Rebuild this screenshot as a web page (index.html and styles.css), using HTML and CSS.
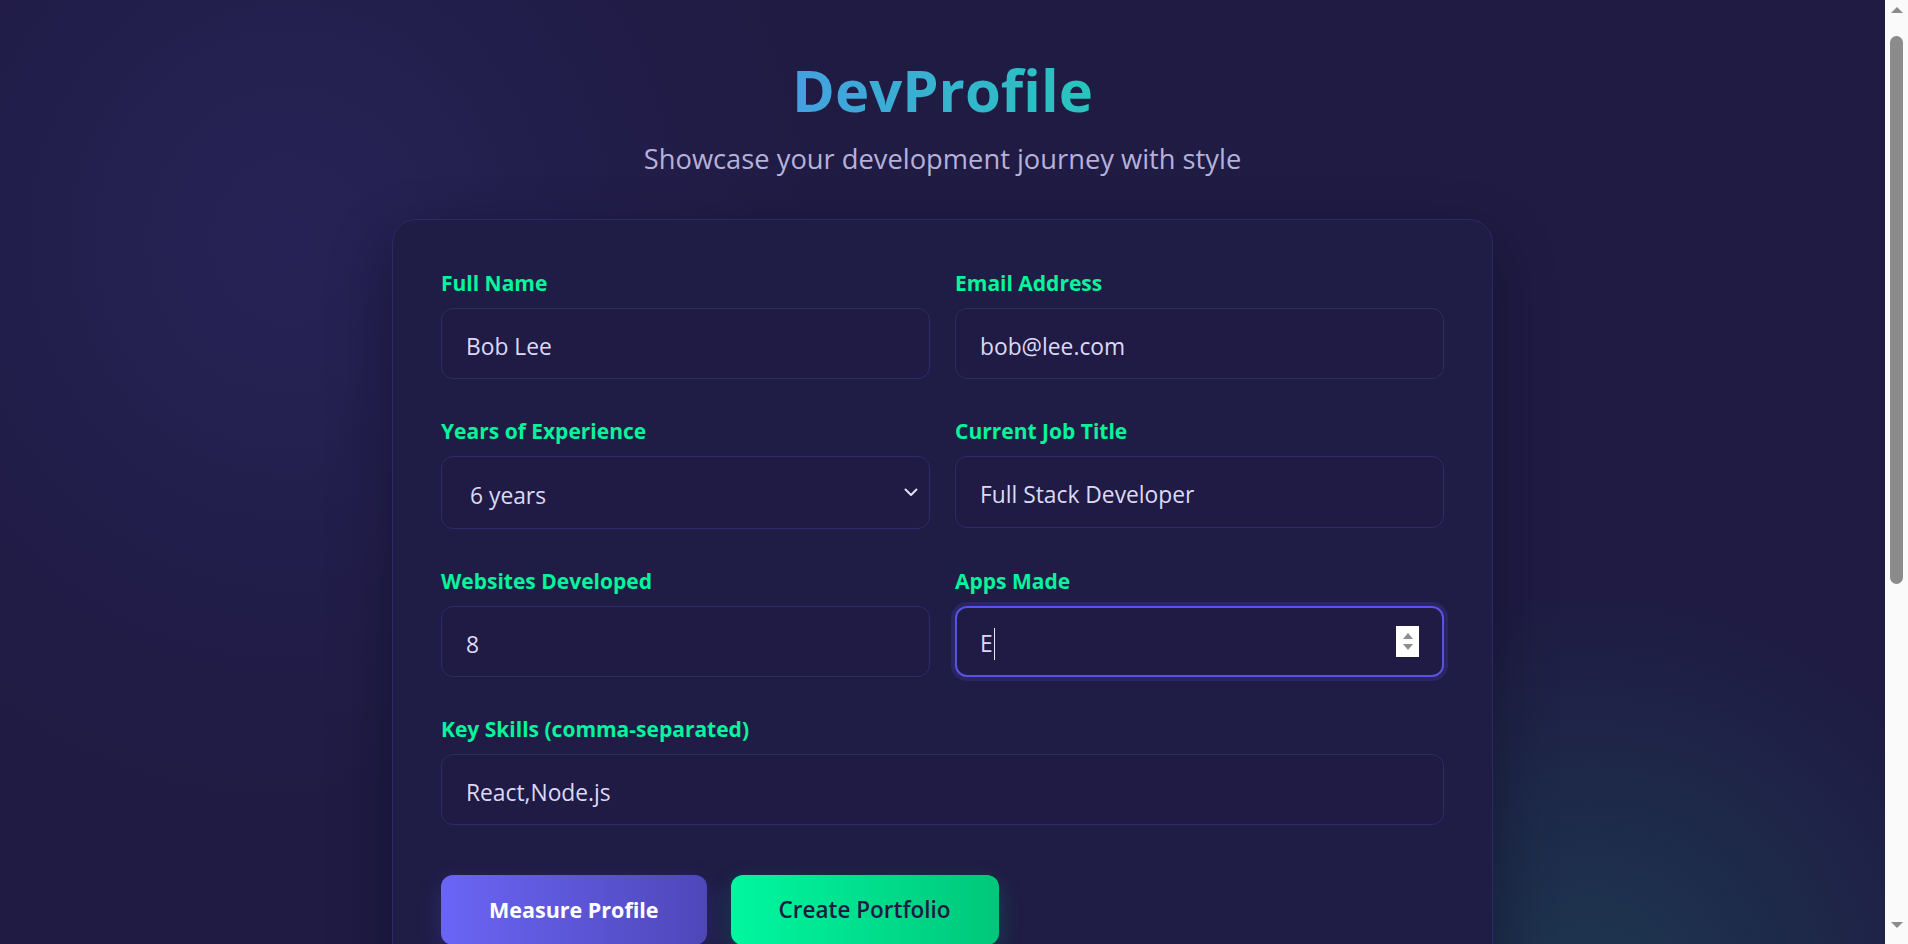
FILE: index.html
```html
<!DOCTYPE html>
<html lang="en">
<head>
<meta charset="utf-8">
<title>DevProfile</title>
<link rel="stylesheet" href="styles.css">
</head>
<body>
<div class="app">
  <div class="viewport">
    <main class="page">
      <header class="hero">
        <h1 class="brand">DevProfile</h1>
        <p class="tagline">Showcase your development journey with style</p>
      </header>

      <section class="card">
        <form class="form" onsubmit="return false">
          <div class="grid">
            <div class="field">
              <label class="label" for="name">Full Name</label>
              <input class="input" id="name" type="text" value="Bob Lee">
            </div>
            <div class="field">
              <label class="label" for="email">Email Address</label>
              <input class="input" id="email" type="email" value="bob@lee.com">
            </div>

            <div class="field">
              <label class="label" for="exp">Years of Experience</label>
              <div class="select-box">
                <select class="select" id="exp">
                  <option>6 years</option>
                </select>
                <svg class="chevron" width="14" height="9" viewBox="0 0 14 9" aria-hidden="true">
                  <path d="M1.5 1.5 L7 7 L12.5 1.5" fill="none" stroke="#e2dff7" stroke-width="2" stroke-linecap="round" stroke-linejoin="round"/>
                </svg>
              </div>
            </div>
            <div class="field">
              <label class="label" for="title">Current Job Title</label>
              <input class="input input-tall" id="title" type="text" value="Full Stack Developer">
            </div>

            <div class="field">
              <label class="label" for="sites">Websites Developed</label>
              <input class="input" id="sites" type="text" value="8">
            </div>
            <div class="field">
              <span class="label" id="apps-label">Apps Made</span>
              <div class="input input-focus" role="textbox" aria-labelledby="apps-label">
                <span class="typed">E</span><span class="caret"></span>
                <span class="spinner" aria-hidden="true"><span class="tri tri-up"></span><span class="tri tri-down"></span></span>
              </div>
            </div>

            <div class="field field-wide">
              <label class="label" for="skills">Key Skills (comma-separated)</label>
              <input class="input" id="skills" type="text" value="React,Node.js">
            </div>
          </div>

          <div class="actions">
            <button type="button" class="btn btn-primary">Measure Profile</button>
            <button type="button" class="btn btn-accent">Create Portfolio</button>
          </div>
        </form>
      </section>
    </main>
  </div>

  <div class="scrollbar" aria-hidden="true">
    <span class="sb-arrow sb-up"></span>
    <div class="sb-track"><div class="sb-thumb"></div></div>
    <span class="sb-arrow sb-down"></span>
  </div>
</div>
</body>
</html>
```

FILE: styles.css
```css
* {
  box-sizing: border-box;
}

html,
body {
  margin: 0;
  height: 100%;
  overflow: hidden;
  background: #1f1b43;
}

body {
  font-family: "Open Sans", "Noto Sans", sans-serif;
  color: #dcd9f5;
}

.app {
  display: flex;
  height: 100vh;
}

.viewport {
  flex: 1;
  min-width: 0;
  overflow-y: auto;
  overflow-x: hidden;
  scrollbar-width: none;
  background:
    radial-gradient(ellipse 520px 560px at 290px 240px, rgba(44, 40, 100, 0.55), rgba(44, 40, 100, 0) 100%),
    radial-gradient(ellipse 420px 400px at 1590px 990px, rgba(28, 64, 84, 0.75), rgba(28, 64, 84, 0) 100%),
    #1f1b43;
}

.viewport::-webkit-scrollbar {
  width: 0;
  display: none;
}

.page {
  display: flex;
  flex-direction: column;
  align-items: center;
  padding: 55px 0 48px;
}

.hero {
  display: flex;
  flex-direction: column;
  align-items: center;
}

.brand {
  margin: 0;
  font-size: 58px;
  line-height: 1.2;
  font-weight: 700;
  background: linear-gradient(90deg, #45a0e0 0%, #26c6bd 100%);
  -webkit-background-clip: text;
  background-clip: text;
  color: transparent;
}

.tagline {
  margin: 14px 0 0;
  font-size: 27.3px;
  line-height: 1.5;
  color: #b6b1da;
}

.card {
  margin-top: 39px;
  width: 1101px;
  padding: 47px 48px 48px;
  border: 1px solid #2c2964;
  border-radius: 24px;
  background: #1f1c45;
  box-shadow: 0 24px 60px rgba(10, 8, 30, 0.45);
}

.grid {
  display: grid;
  grid-template-columns: 1fr 1fr;
  column-gap: 25px;
  row-gap: 36px;
}

.field {
  display: flex;
  flex-direction: column;
  gap: 8px;
}

.field-wide {
  grid-column: 1 / -1;
}

.label {
  font-size: 21px;
  line-height: 33px;
  font-weight: 700;
  color: #06f49c;
}

.input {
  height: 71px;
  width: 100%;
  padding: 6px 24px 0;
  border: 1px solid #2f2b6b;
  border-radius: 12px;
  background: #1f1b45;
  color: #dcd9f5;
  font-family: inherit;
  font-size: 22.8px;
  outline: none;
}

.input-tall {
  height: 72px;
}

.input-focus {
  display: flex;
  align-items: center;
  border: 2px solid #5a52e0;
  padding: 0 23px;
  box-shadow: 0 0 0 4px rgba(84, 76, 210, 0.22);
}

.typed {
  line-height: 1;
  margin-top: 6px;
}

.caret {
  width: 1px;
  height: 32px;
  margin-top: 6px;
  margin-left: 1px;
  background: #e6e3fb;
}

.spinner {
  margin-left: auto;
  width: 23px;
  height: 31px;
  background: #ffffff;
  display: flex;
  flex-direction: column;
  align-items: center;
  justify-content: center;
  gap: 5px;
}

.tri {
  width: 0;
  height: 0;
  border-left: 5px solid transparent;
  border-right: 5px solid transparent;
}

.tri-up {
  border-bottom: 6px solid #8d8d8d;
}

.tri-down {
  border-top: 6px solid #8d8d8d;
}

.select-box {
  height: 73px;
  display: flex;
  align-items: center;
  border: 1px solid #2f2b6b;
  border-radius: 12px;
  background: #1f1b45;
  padding-right: 11px;
}

.select {
  flex: 1;
  height: 100%;
  appearance: none;
  -webkit-appearance: none;
  border: none;
  background: transparent;
  color: #dcd9f5;
  font-family: inherit;
  font-size: 22.8px;
  padding: 6px 28px 0;
  outline: none;
}

.chevron {
  flex: none;
}

.actions {
  display: flex;
  gap: 24px;
  margin-top: 50px;
}

.btn {
  height: 70px;
  padding: 0 48px;
  border: none;
  border-radius: 12px;
  font-family: inherit;
  font-size: 21.5px;
  cursor: pointer;
}

.btn-primary {
  font-weight: 700;
  color: #ffffff;
  background: linear-gradient(90deg, #6b65f6 0%, #4e47b9 100%);
  box-shadow: 0 8px 24px rgba(90, 80, 230, 0.25);
}

.btn-accent {
  font-weight: 600;
  font-size: 22.5px;
  color: #1e1b44;
  background: linear-gradient(90deg, #00f7a0 0%, #00c77a 100%);
  box-shadow: 0 8px 24px rgba(0, 230, 150, 0.2);
}

/* scrollbar drawn as a column beside the viewport */
.scrollbar {
  flex: none;
  width: 23px;
  display: flex;
  flex-direction: column;
  background: #fafafa;
}

.sb-arrow {
  flex: none;
  height: 30px;
  display: flex;
  justify-content: center;
}

.sb-up {
  align-items: flex-start;
  padding-top: 7px;
}

.sb-up::before {
  content: "";
  border-left: 6px solid transparent;
  border-right: 6px solid transparent;
  border-bottom: 6px solid #8b8b8b;
}

.sb-down {
  align-items: flex-end;
  padding-bottom: 16px;
}

.sb-down::before {
  content: "";
  border-left: 6px solid transparent;
  border-right: 6px solid transparent;
  border-top: 6px solid #8b8b8b;
}

.sb-track {
  flex: 1;
  padding: 6px 5px 0;
}

.sb-thumb {
  height: 548px;
  border-radius: 7px;
  background: #8b8b8b;
}
```
